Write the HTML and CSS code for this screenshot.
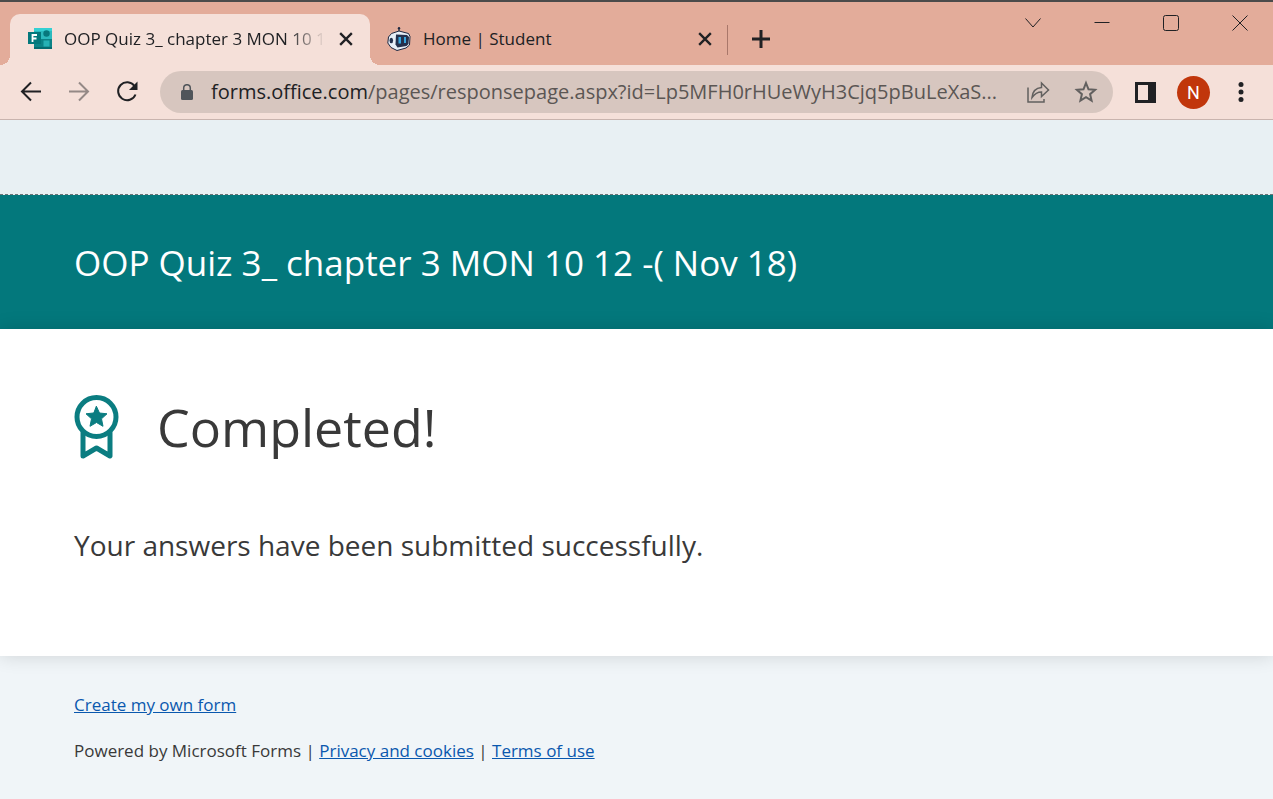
FILE: index.html
```html
<!DOCTYPE html>
<html lang="en">
<head>
<meta charset="utf-8">
<title>OOP Quiz 3_ chapter 3 MON 10 12 -( Nov 18)</title>
<link rel="stylesheet" href="styles.css">
</head>
<body>
<header class="browser">
  <div class="tabstrip">
    <div class="tab tab-active">
      <svg class="favicon" viewBox="0 0 24 24" aria-hidden="true">
        <path d="M6 1h18v21H6z" fill="#2bb9bd"/>
        <path d="M6 1h18v3H6z" fill="#35d0d3"/>
        <path d="M6 12h18v10H6z" fill="#0b8387"/>
        <path d="M6 20h18v2H6z" fill="#056b70"/>
        <circle cx="18.5" cy="6.5" r="3.2" fill="#07787d"/>
        <path d="M15.5 13.500h6v6h-6z" fill="#26b1b5"/>
        <path d="M0 5h13v12H0z" fill="#03787c"/>
        <path d="M4.500 15V8h4.500M4.500 11.500h4" fill="none" stroke="#fff" stroke-width="1.800"/>
      </svg>
      <span class="tab-title tab-title-fade">OOP Quiz 3_ chapter 3 MON 10 1</span>
      <button class="tab-close" aria-label="Close tab"><svg viewBox="0 0 12 12"><path d="M1 1l10 10M11 1L1 11"/></svg></button>
    </div>
    <div class="tab tab-idle">
      <svg class="favicon" viewBox="0 0 24 24" aria-hidden="true">
        <path d="M12 4V1" stroke="#1c2740" stroke-width="1.200"/><circle cx="12" cy="1.200" r="1.200" fill="#1c2740"/>
        <path d="M4.500 6.500L12 4l9.500 2.500 1.500 3-.5 8.500-3.500 3-9 2.500-6-3L.8 16l.7-6z" fill="#e7eef7" stroke="#1c2740" stroke-width="1"/>
        <path d="M9 7.500l11 .5 2 2-.5 7-2 2-9 1.500-2-3z" fill="#24304d"/>
        <path d="M11.500 10H14v6.500h-2.500zM17 10h2v6h-2z" fill="#36a6df"/>
        <ellipse cx="4.300" cy="13.500" rx="1.800" ry="2.800" fill="#24304d"/>
      </svg>
      <span class="tab-title">Home | Student</span>
      <button class="tab-close" aria-label="Close tab"><svg viewBox="0 0 12 12"><path d="M1 1l10 10M11 1L1 11"/></svg></button>
    </div>
    <button class="new-tab" aria-label="New tab"><svg viewBox="0 0 18 18"><path d="M9 0v18M0 9h18"/></svg></button>
    <div class="window-controls">
      <button aria-label="Search tabs"><svg viewBox="0 0 16 16"><path d="M.5 3.500L8 12l7.500-8.500"/></svg></button>
      <button aria-label="Minimize"><svg viewBox="0 0 16 16"><path d="M.5 7.500h15"/></svg></button>
      <button aria-label="Maximize"><svg viewBox="0 0 16 16"><rect x=".5" y=".5" width="15" height="15" rx="2"/></svg></button>
      <button aria-label="Close"><svg viewBox="0 0 16 16"><path d="M.5.5l15 15M15.500.5l-15 15"/></svg></button>
    </div>
  </div>
  <div class="toolbar">
    <button class="nav-btn" aria-label="Back"><svg viewBox="0 0 24 24"><path d="M22 11.500H3M12 2.500l-9 9 9 9"/></svg></button>
    <button class="nav-btn nav-off" aria-label="Forward"><svg viewBox="0 0 24 24"><path d="M2 11.500h19M12 2.500l9 9-9 9"/></svg></button>
    <button class="nav-btn" aria-label="Reload"><svg viewBox="0 0 24 24"><path d="M19.500 6A9 9 0 1 0 20.500 14.500"/><path d="M22.500 1.500v8.500h-8.500z" fill="#202124" stroke="none"/></svg></button>
    <div class="address">
      <svg class="lock" viewBox="0 0 12 16" aria-hidden="true"><rect y="6" width="12" height="10" rx="1.500" fill="#50555a"/><path d="M2.700 7V4a3.300 3.300 0 0 1 6.600 0v3" fill="none" stroke="#50555a" stroke-width="1.500"/></svg>
      <span class="url"><span class="host">forms.office.com</span>/pages/responsepage.aspx?id=Lp5MFH0rHUeWyH3Cjq5pBuLeXaS...</span>
      <button class="address-btn" aria-label="Share"><svg viewBox="0 0 24 24"><path d="M2 7.500V22h16v-3"/><path d="M6 17.500c.5-6 3.500-9.500 9.500-10V3l7 7-7 6.500v-4.500c-4.500 0-7 2-9.500 5.500z"/></svg></button>
      <button class="address-btn" aria-label="Bookmark"><svg viewBox="0 0 24 24"><path d="M12 3l2.500 6.300 6.600.5-5 4.400 1.500 6.500L12 17.200l-5.600 3.500 1.500-6.500-5-4.400 6.600-.5z"/></svg></button>
    </div>
    <button class="panel-btn" aria-label="Side panel"><svg viewBox="0 0 21 21"><path d="M0 0h21v21H0zM3 3v15h10V3z" fill="#202124" fill-rule="evenodd"/></svg></button>
    <button class="avatar">N</button>
    <button class="menu-btn" aria-label="Menu"><svg viewBox="0 0 6 20"><circle cx="3" cy="2.500" r="2.500"/><circle cx="3" cy="10" r="2.500"/><circle cx="3" cy="17.500" r="2.500"/></svg></button>
  </div>
</header>
<main class="form">
  <h1 class="form-title">OOP Quiz 3_ chapter 3 MON 10 12 -( Nov 18)</h1>
  <section class="result">
    <div class="result-head">
      <svg class="medal" viewBox="0 0 44 64" aria-hidden="true">
        <circle cx="22" cy="22" r="19.500"/>
        <path d="M8.500 38v23L22 53l13.500 8V38"/>
        <path class="medal-star" d="M22 11.500l3 6.500 7.500.8-5.500 5 1.500 7.500L22 27.500l-6.500 3.800 1.500-7.500-5.500-5L19 18z"/>
      </svg>
      <h2>Completed!</h2>
    </div>
    <p>Your answers have been submitted successfully.</p>
  </section>
</main>
<footer class="footer">
  <p><a href="#create">Create my own form</a></p>
  <p>Powered by Microsoft Forms | <a href="#privacy">Privacy and cookies</a> | <a href="#terms">Terms of use</a></p>
</footer>
</body>
</html>
```

FILE: styles.css
```css
* { box-sizing: border-box; }
body {
  margin: 0;
  min-height: 100vh;
  background: #f0f5f8;
  color: #393939;
  font-family: "Open Sans", "Noto Sans", sans-serif;
}
h1, h2, p { margin: 0; font-weight: 400; }
button { border: 0; padding: 0; background: none; font: inherit; color: inherit; }
svg { display: block; }
.browser { border-top: 2px solid #4b4b4b; border-bottom: 1px solid #c9b4ae; background: #f5e0d9; }
.tabstrip { display: flex; height: 63px; background: #e3ac9a; }
.tab { position: relative; display: flex; align-items: center; margin-top: 12px; padding-bottom: 2px; color: #202124; }
.tab-active {
  width: 360px;
  margin-left: 10px;
  padding-left: 18px;
  padding-right: 17px;
  border-radius: 10px 10px 0 0;
  background: #f5e0d9;
}
.tab-active::before, .tab-active::after {
  content: "";
  position: absolute;
  bottom: 0;
  width: 10px;
  height: 10px;
}
.tab-active::before { right: 100%; background: radial-gradient(circle at 0 0, #e3ac9a 10px, #f5e0d9 10px); }
.tab-active::after { left: 100%; background: radial-gradient(circle at 100% 0, #e3ac9a 10px, #f5e0d9 10px); }
.tab-idle { width: 358px; padding-left: 17px; padding-right: 16px; }
.tab-idle::after { content: ""; position: absolute; right: 0; top: 11px; width: 1px; height: 30px; background: #a9776a; }
.favicon { flex: none; width: 24px; height: 24px; }
.tab-title { flex: 1; min-width: 0; margin: 0 12px; font-size: 17px; line-height: 24px; white-space: nowrap; overflow: hidden; }
.tab-title-fade { margin-right: 8px; mask-image: linear-gradient(to right, #000 84%, transparent 98%); }
.tab-close { flex: none; }
.tab-close svg { width: 14px; height: 14px; fill: none; stroke: #202124; stroke-width: 2; }
.new-tab { margin: 12px 0 2px 24px; }
.new-tab svg { width: 18px; height: 18px; stroke: #202124; stroke-width: 3; }
.window-controls { display: flex; gap: 53px; margin: 13px 25px 0 auto; height: 16px; }
.window-controls svg { width: 16px; height: 16px; fill: none; stroke: #202124; stroke-width: 1; }
.toolbar { display: flex; align-items: center; height: 54px; padding: 0 29px 0 19px; }
.nav-btn { margin-right: 24px; }
.nav-btn svg { width: 24px; height: 24px; fill: none; stroke: #202124; stroke-width: 2; }
.nav-off { opacity: .45; }
.address { display: flex; flex: 1; min-width: 0; align-items: center; height: 42px; margin: 0 22px 0 -3px; padding: 0 15px 0 21px; border-radius: 21px; background: #d7c6bf; }
.lock { flex: none; width: 12px; height: 16px; }
.url { flex: 1; min-width: 0; margin: 0 12px 0 18px; overflow: hidden; white-space: nowrap; font-size: 20px; line-height: 28px; color: #5b5654; }
.host { color: #202124; }
.address-btn + .address-btn { margin-left: 24px; }
.address-btn svg { width: 24px; height: 24px; fill: none; stroke: #62605f; stroke-width: 2; }
.address-btn:first-of-type svg { stroke-width: 1.500; }
.panel-btn svg { width: 21px; height: 21px; }
.avatar { width: 33px; height: 33px; margin: 0 28px 0 21px; border-radius: 50%; background: #c1360b; color: #fff; font-family: Roboto, sans-serif; font-size: 18px; line-height: 33px; }
.menu-btn svg { width: 6px; height: 20px; fill: #202124; }
.form { padding-top: 74px; background: #e8f0f3; }
.form-title { padding: 44px 74px 42px; border-top: 1px dashed #6c7476; background: #03787c padding-box; color: #fff; font-size: 35px; line-height: 48px; }
.result { padding: 58px 74px 91px; background: #fff; box-shadow: 0 0 18px rgba(0, 0, 0, .14); }
.result-head { display: flex; align-items: center; gap: 38px; }
.medal { width: 45px; height: 64px; fill: none; stroke: #0b7d81; stroke-width: 5; stroke-linejoin: round; stroke-linecap: round; }
.medal-star { fill: #0b7d81; stroke-width: 1; }
.result h2 { font-size: 52px; line-height: 80px; }
.result p { margin-top: 58px; font-size: 28px; line-height: 40px; }
.footer { display: grid; gap: 22px; padding: 37px 74px; font-size: 17px; line-height: 24px; }
.footer a { color: #0a58ae; }
```
